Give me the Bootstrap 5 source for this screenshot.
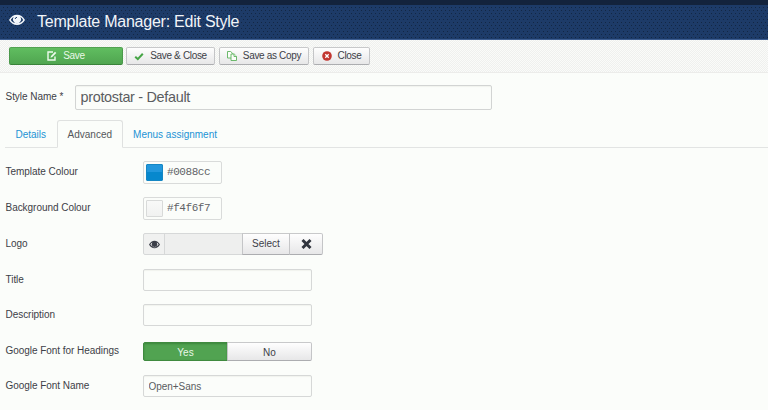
<!DOCTYPE html>
<html lang="en">
<head>
<meta charset="utf-8">
<meta name="viewport" content="width=device-width, initial-scale=1">
<title>Template Manager: Edit Style</title>
<link href="https://cdn.jsdelivr.net/npm/bootstrap@5.3.0/dist/css/bootstrap.min.css" rel="stylesheet">
<style>
body{font-family:"Liberation Sans",Arial,sans-serif;font-size:10px;letter-spacing:-.04px;line-height:14px;color:#3d4047;background:#fbfdfa;height:410px;overflow:hidden}
.topstrip{height:5px;background:#13233c}
.titlebar{height:35px;background:
 conic-gradient(from 270deg at 1px 1px,#132744 90deg,transparent 0) 1px 5px/4px 6px,
 conic-gradient(from 270deg at 1px 1px,#132744 90deg,transparent 0) 3px 2px/4px 6px,#1d3b68;border-bottom:1px solid #3c5d91;padding-left:9px}
.titlebar svg{margin-top:-4px}
.titlebar h1{font-size:16px;letter-spacing:-.24px;line-height:20px;color:#f1f4f8;font-weight:400;margin-left:12px}
.toolbar{height:33px;padding:0 0 0 9px;gap:4px;border-bottom:1px solid #ececea;background:repeating-conic-gradient(#eff0ee 0 25%,#fafbf9 0 50%) 0 0/2px 2px}
.btn{--bs-btn-font-size:10px;--bs-btn-line-height:12px;--bs-btn-padding-y:0;--bs-btn-padding-x:0;--bs-btn-border-radius:2px;--bs-btn-color:#3d4047;border-color:#c8c9ca #c4c5c7 #acadb0;background:linear-gradient(#fefefe,#e7e7e8)}
.toolbar .btn{height:18px;gap:6px;letter-spacing:-.33px}
.toolbar .w-save{letter-spacing:-.3px}
.btn.btn-success{color:#e9f8e7;background:linear-gradient(#60bd60,#50a550);border-color:#52a252 #4b994b #398239}
.w-save{width:114px}.w-close{width:89px}.w-copy{width:90px}.w-cancel{width:57px}
.w-close{margin-left:-1px}
.form-control{font-size:10px;letter-spacing:-.04px;line-height:14px;padding:0 4.5px;border:1px solid #d6d8d7;border-radius:2px;background:#fbfdfa;color:#5a5c60;min-height:0;height:22px;box-shadow:inset 0 1px 1px #f1f3ee}
.stylename{padding:12px 0 0 5.5px}
.stylename label{width:69.5px;padding-bottom:1px}
.stylename .form-control{width:417px;height:25px;font-size:14.4px;letter-spacing:-.3px;padding-bottom:1px;border-color:#d2d4d3}
.nav-tabs{margin:10px 0 0 5px;border-color:#e2e4e3}
.nav-tabs .nav-link{line-height:14px;height:28px;padding:6.5px 9.5px;border-radius:3px 3px 0 0;color:#1c93d5;font-size:10px;letter-spacing:0}
.nav-tabs .nav-link.active{color:#55575b;background:#fbfdfa;border-color:#dfe1e0 #dfe1e0 #fbfdfa}
.nav-tabs li:nth-child(2) .nav-link{margin-left:.5px}
.settings{padding:13px 0 0 5.5px}
.settings label,.settings .fieldlabel{width:137.5px;flex:none}
.setting{height:36px}
.setting.tight{height:35px}
.colorbox{width:79px;height:23px;border:1px solid #d9dbda;border-radius:2px;padding:0 2px}
.swatch{width:17px;height:17px;border-radius:1px;border:1px solid #1587c4;background:linear-gradient(#2297dc 45%,#0788cd 45%)}
.swatch.light{border-color:#d8dad9;background:linear-gradient(#f8f9f8,#f1f2f1)}
.colorbox input{border:0;background:none;padding:0 0 1px 4px;width:56px;color:#606266;font-family:"Liberation Mono",monospace;font-size:11px;letter-spacing:-.43px;outline:0}
.media{width:180px;height:22px}
.media .input-group-text{width:22px;padding:0;border:1px solid #d6d8d8;background:#f0f1f0;border-radius:2px}
.media .form-control{background:#eeefee;box-shadow:none;border-color:#d6d8d8}
.media .btn{width:48px}.media .btn:last-child{width:34px}
.wfield{width:169px}
.btn-group{width:169px;height:19px;margin-top:2px}
.btn-group .btn{width:50%;padding-top:2px}
.btn-group .btn.btn-success{background:#51a351;box-shadow:inset 0 1px 2px #3c853c;border-color:#3f8a3f}
</style>
</head>
<body>
<div class="topstrip"></div>
<header class="titlebar d-flex align-items-center">
 <svg width="16" height="12" viewBox="0 0 16 12"><path fill="#f4f7fb" fill-rule="evenodd" d="M0 6Q3 .7 8 .7T16 6q-3 5-8 5T0 6zm1.800 0Q4 9.300 8 9.300T14.200 6Q13 3.700 11.300 3.100a4 4 0 1 1-6.600 0Q3 3.700 1.800 6z"/><circle cx="8" cy="5.200" r="3.200" fill="#f4f7fb"/><path d="M6.200 5Q6.200 3.500 8 3.300" stroke="#1d3b68" fill="none"/></svg>
 <h1 class="mb-0">Template Manager: Edit Style</h1>
</header>
<div class="toolbar d-flex align-items-center">
 <button class="btn btn-success w-save d-flex align-items-center justify-content-center"><svg width="10" height="10" viewBox="0 0 10 10" fill="none" stroke="#eefbee" stroke-width="1.4"><path d="M6 1H1v8h7V5.500"/><path d="M3.500 6.700l.5-1.800L8 .8l1.300 1.300-4 4z" fill="#eefbee" stroke="none"/></svg>Save</button>
 <button class="btn w-close d-flex align-items-center justify-content-center"><svg width="10" height="9" viewBox="0 0 9 9"><path d="M.7 4.700L3.300 7.100 8.300 1.700" fill="none" stroke="#46a546" stroke-width="2"/></svg>Save &amp; Close</button>
 <button class="btn w-copy d-flex align-items-center justify-content-center"><svg width="10" height="10" viewBox="0 0 10 10" fill="#fbfdfa" stroke="#5cb25c" stroke-width=".9"><path d="M.5.5h3.200L5.800 2.600V7H.5z"/><path d="M4 3h3.200l2.300 2.300V9.500H4z"/><path d="M7 3v2.500h2.500"/></svg>Save as Copy</button>
 <button class="btn w-cancel d-flex align-items-center justify-content-center"><svg width="10" height="10" viewBox="0 0 10 10"><circle cx="5" cy="5" r="4.800" fill="#c23630"/><path d="M3.300 3.300l3.400 3.400M6.700 3.300L3.300 6.700" stroke="#fff" stroke-width="1.300"/></svg>Close</button>
</div>
<main>
 <div class="stylename d-flex align-items-center"><label for="sname">Style Name *</label><input id="sname" class="form-control" value="protostar - Default"></div>
 <ul class="nav nav-tabs">
  <li class="nav-item"><a class="nav-link" href="#">Details</a></li>
  <li class="nav-item"><a class="nav-link active" href="#">Advanced</a></li>
  <li class="nav-item"><a class="nav-link" href="#">Menus assignment</a></li>
 </ul>
 <div class="settings">
  <div class="setting d-flex align-items-start"><label class="pt-1" for="tc">Template Colour</label><div class="colorbox d-flex align-items-center"><span class="swatch flex-shrink-0"></span><input id="tc" value="#0088cc"></div></div>
  <div class="setting d-flex align-items-start"><label class="pt-1" for="bc">Background Colour</label><div class="colorbox d-flex align-items-center"><span class="swatch light flex-shrink-0"></span><input id="bc" value="#f4f6f7"></div></div>
  <div class="setting d-flex align-items-start"><label class="pt-1" for="logo">Logo</label><div class="media input-group flex-nowrap"><span class="input-group-text justify-content-center"><svg width="11" height="9" viewBox="0 0 16 12"><path fill="#3b3f48" fill-rule="evenodd" d="M0 6Q3 .5 8 .5T16 6q-3 5.500-8 5.500T0 6zm2 0q2 3.500 6 3.500T14 6q-1-2-3-2.800a4 4 0 1 1-6 0Q3 4 2 6z"/><circle cx="8" cy="5.300" r="3.300" fill="#3b3f48"/></svg></span><input id="logo" class="form-control" readonly><button class="btn">Select</button><button class="btn" aria-label="Clear"><svg width="11" height="10" viewBox="0 0 11 10"><path d="M1.500 1l8 8M9.500 1l-8 8" stroke="#30343d" stroke-width="2.900"/></svg></button></div></div>
  <div class="setting tight d-flex align-items-start"><label class="pt-1" for="ttl">Title</label><input id="ttl" class="form-control wfield"></div>
  <div class="setting d-flex align-items-start"><label class="pt-1" for="desc">Description</label><input id="desc" class="form-control wfield"></div>
  <div class="setting tight d-flex align-items-start"><span class="fieldlabel pt-1">Google Font for Headings</span><div class="btn-group"><button class="btn btn-success">Yes</button><button class="btn">No</button></div></div>
  <div class="setting d-flex align-items-start"><label class="pt-1" for="gf">Google Font Name</label><input id="gf" class="form-control wfield" value="Open+Sans"></div>
 </div>
</main>
<script src="https://cdn.jsdelivr.net/npm/bootstrap@5.3.0/dist/js/bootstrap.bundle.min.js"></script>
</body>
</html>
